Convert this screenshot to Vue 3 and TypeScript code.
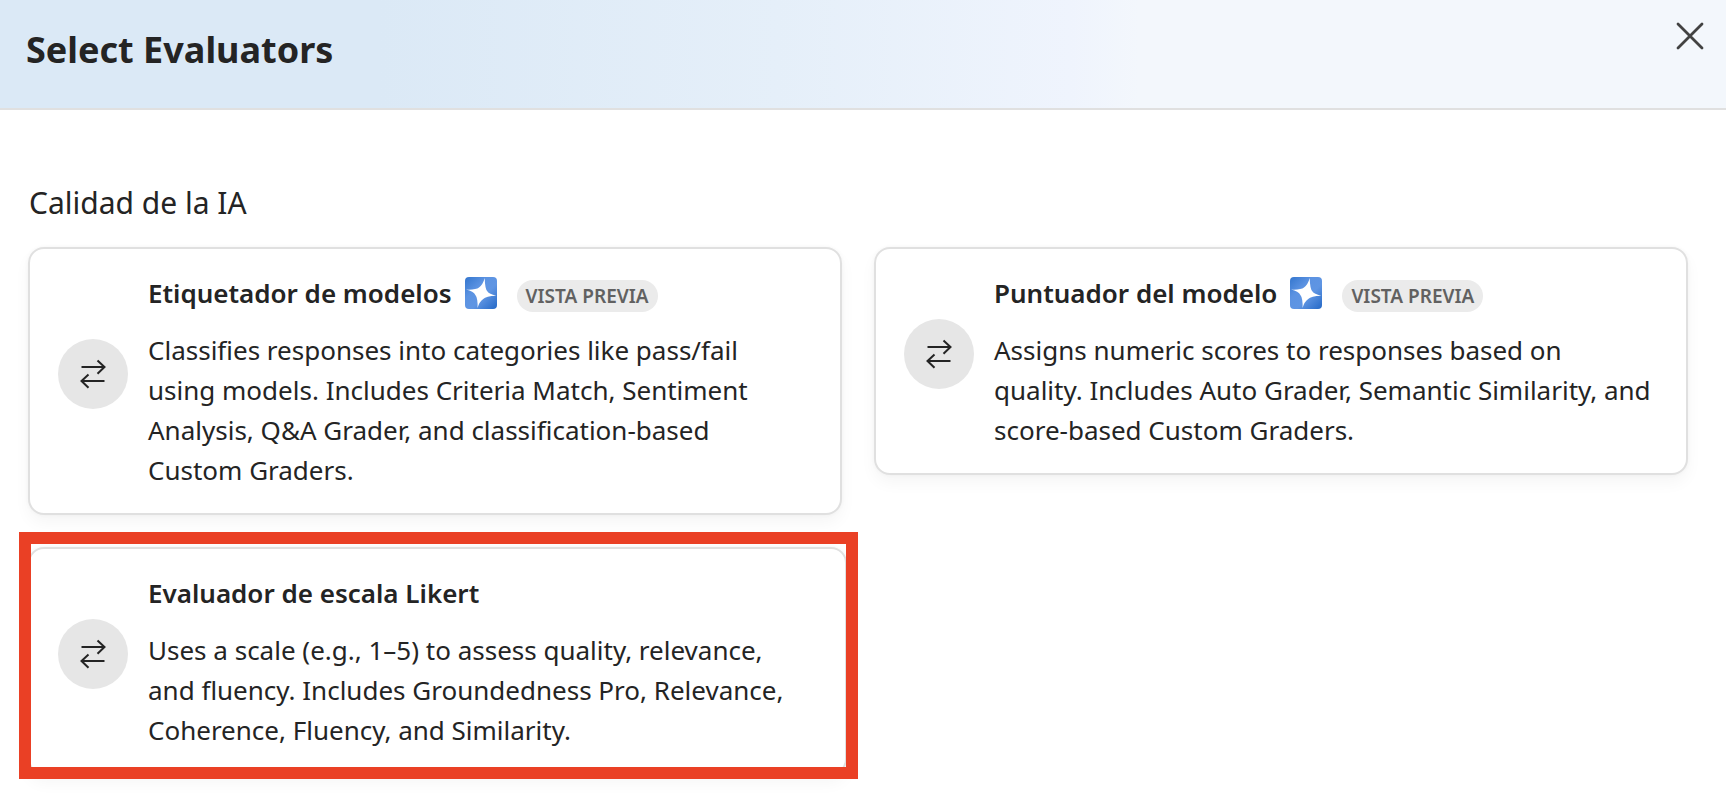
<script setup lang="ts">
interface Evaluator {
  id: string
  title: string
  description: string
  preview: boolean
  highlighted: boolean
}

const evaluators: Evaluator[] = [
  {
    id: 'labeler',
    title: 'Etiquetador de modelos',
    description:
      'Classifies responses into categories like pass/fail using models. Includes Criteria Match, Sentiment Analysis, Q&A Grader, and classification-based Custom Graders.',
    preview: true,
    highlighted: false,
  },
  {
    id: 'scorer',
    title: 'Puntuador del modelo',
    description:
      'Assigns numeric scores to responses based on quality. Includes Auto Grader, Semantic Similarity, and score-based Custom Graders.',
    preview: true,
    highlighted: false,
  },
  {
    id: 'likert',
    title: 'Evaluador de escala Likert',
    description:
      'Uses a scale (e.g., 1–5) to assess quality, relevance, and fluency. Includes Groundedness Pro, Relevance, Coherence, Fluency, and Similarity.',
    preview: false,
    highlighted: true,
  },
]
</script>

<template>
  <div class="panel" role="dialog" aria-labelledby="panel-title">
    <header class="panel-header">
      <h1 id="panel-title">Select Evaluators</h1>
      <button class="close" type="button" aria-label="Close">
        <svg width="32" height="32" viewBox="0 0 32 32" aria-hidden="true">
          <path d="M4 4 28 28M28 4 4 28" fill="none" stroke="#424242" stroke-width="2.8" stroke-linecap="round" />
        </svg>
      </button>
    </header>

    <main class="panel-body">
      <h2>Calidad de la IA</h2>
      <ul class="cards">
        <li v-for="item in evaluators" :key="item.id" :class="{ highlighted: item.highlighted }">
          <button class="card" type="button">
            <span class="badge-icon">
              <svg width="70" height="70" viewBox="0 0 70 70" aria-hidden="true">
                <path
                  d="M23.5 28H46.5M39.5 21.5 46.5 28 39.5 34.8M46.5 42H23.5M30.5 35.5 23.5 42 30.5 48.8"
                  fill="none"
                  stroke="#242424"
                  stroke-width="2"
                />
              </svg>
            </span>
            <span class="content">
              <span class="title-row">
                <strong>{{ item.title }}</strong>
                <template v-if="item.preview">
                  <svg class="spark" width="32" height="32" viewBox="0 0 32 32" aria-hidden="true">
                    <defs>
                      <linearGradient :id="`spark-${item.id}`" x1="0" y1="0" x2="1" y2="1">
                        <stop offset="0" stop-color="#3476ce" />
                        <stop offset="0.35" stop-color="#5c93e2" />
                        <stop offset="0.6" stop-color="#5f95e3" />
                        <stop offset="1" stop-color="#2468c6" />
                      </linearGradient>
                    </defs>
                    <rect width="32" height="32" rx="4" :fill="`url(#spark-${item.id})`" />
                    <path
                      d="M19.7 1Q20 12.5 22.5 14.5Q24 17 31.2 18.8Q21 19 18.2 22Q14 25 12.6 31Q12.8 21 10.5 18.2Q8.5 14.5 1 12.6Q11 13 14 10.5Q18 7.500 19.7 1Z"
                      fill="#fff"
                    />
                  </svg>
                  <span class="tag">VISTA PREVIA</span>
                </template>
              </span>
              <span class="description">{{ item.description }}</span>
            </span>
          </button>
        </li>
      </ul>
    </main>
  </div>
</template>

<style>
body {
  margin: 0;
  background: #fff;
}
</style>

<style scoped>
.panel {
  min-height: 100vh;
  font-family: 'Noto Sans', 'Open Sans', sans-serif;
  color: #242424;
}

.panel-header {
  display: flex;
  align-items: flex-start;
  justify-content: space-between;
  padding: 20px 20px 28px 26px;
  border-bottom: 2px solid #e0e0e0;
  background: linear-gradient(90deg, #dbe9f6 0%, #dbe9f6 22%, #e5eff9 45%, #eff4fd 62%, #f3f7fc 66%, #f3f7fc 100%);
}

h1 {
  margin: 6px 0 0;
  font-size: 36px;
  font-weight: 700;
  line-height: 48px;
  min-height: 54px;
}

.close {
  display: flex;
  padding: 0;
  border: 0;
  background: none;
  cursor: pointer;
}

.panel-body {
  padding: 73px 38px 15px 28px;
}

h2 {
  margin: 0 0 24px;
  padding-left: 1px;
  font-size: 30px;
  font-weight: 400;
  line-height: 40px;
}

.cards {
  display: grid;
  grid-template-columns: 1fr 1fr;
  gap: 32px;
  align-items: start;
  margin: 0;
  padding: 0;
  list-style: none;
}

.card {
  display: flex;
  align-items: center;
  gap: 20px;
  width: 100%;
  padding: 24px 32px 23px 28px;
  border: 2px solid #e0e0e0;
  border-radius: 16px;
  background: #fff;
  box-shadow: 0 0 4px rgba(0, 0, 0, 0.04), 0 8px 16px rgba(0, 0, 0, 0.04);
  color: inherit;
  font: inherit;
  text-align: left;
  cursor: pointer;
}

.badge-icon {
  display: flex;
  flex: none;
  margin-bottom: 16px;
  border-radius: 50%;
  background: #e6e6e6;
}

.content {
  display: flex;
  flex: 1;
  flex-direction: column;
  gap: 17px;
  min-width: 0;
  font-size: 26px;
  line-height: 40px;
}

.title-row {
  display: flex;
  align-items: center;
}

.title-row strong {
  font-weight: 600;
}

.spark {
  margin-left: 13px;
}

.tag {
  margin-top: 6px;
  margin-left: 20px;
  padding: 0 9px;
  border-radius: 16px;
  background: #ebebeb;
  color: #616161;
  font-size: 19px;
  font-weight: 600;
  line-height: 32px;
}

.highlighted {
  position: relative;
  margin-right: -5px;
}

.highlighted::after {
  content: '';
  position: absolute;
  inset: -15px -11px -4px -9px;
  border: 12px solid #ea4025;
  pointer-events: none;
}
</style>
